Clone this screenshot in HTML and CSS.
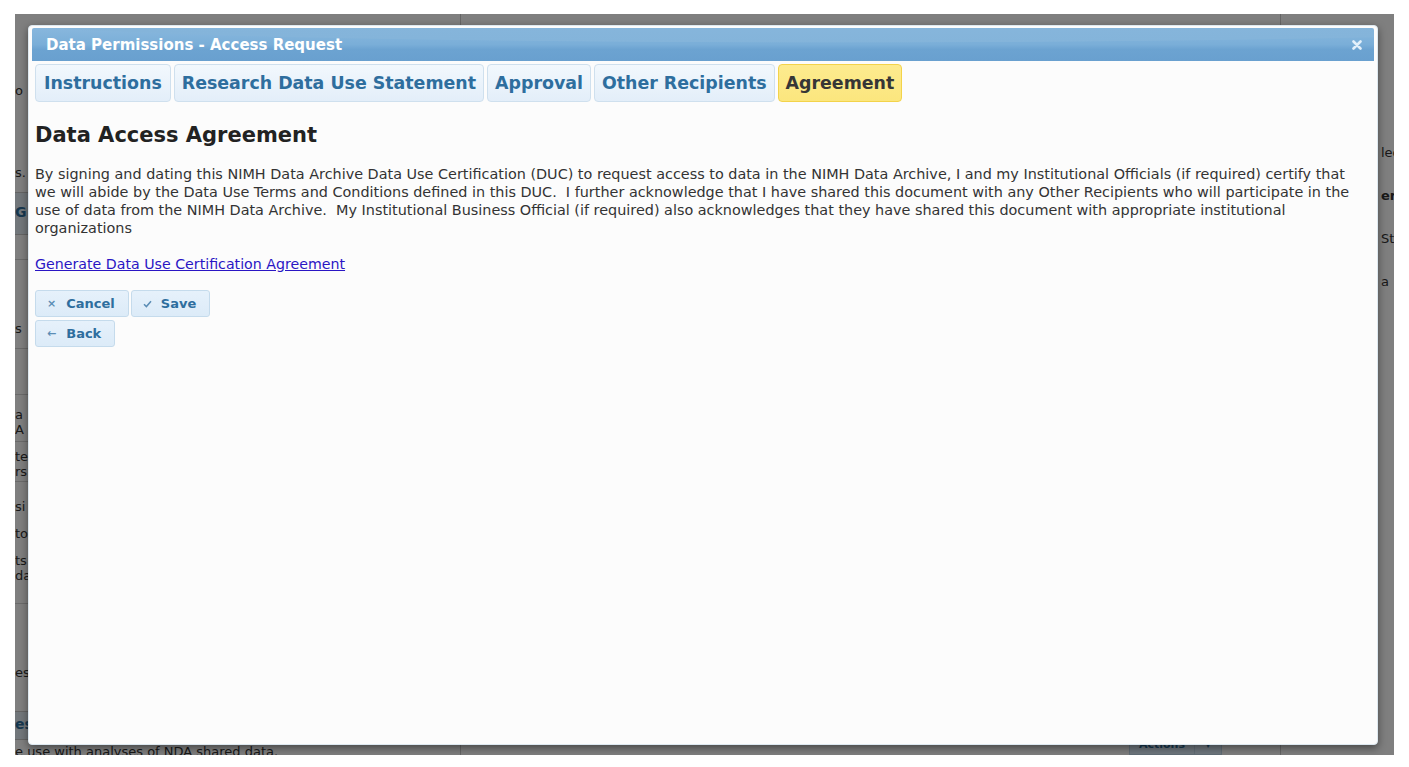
FILE: index.html
```html
<!DOCTYPE html>
<html>
<head>
<meta charset="utf-8">
<link rel="stylesheet" href="styles.css">
<title>Data Permissions - Access Request</title>
</head>
<body>
<div class="viewport">
  <div class="bgpage">
    <div class="bg-left">
      <div class="bl f-o">o</div>
      <div class="bl f-s">s.</div>
      <div class="bl band band-g">G</div>
      <div class="bl row-empty"></div>
      <div class="bl f-s2">s</div>
      <div class="bl row-gap"></div>
      <div class="bl f-a">a<br>A</div>
      <div class="bl f-te">te<br>rs</div>
      <div class="bl f-si">si<br><span class="gapline">to</span><br><span class="gapline">ts</span><br>da</div>
      <div class="bl f-es">es</div>
      <div class="bl band band-es">es</div>
      <div class="bl f-last">e use with analyses of NDA shared data.</div>
    </div>
    <div class="bg-right">
      <div class="br">lec</div>
      <div class="br bold">err</div>
      <div class="br">St</div>
      <div class="br">a</div>
      <div class="actions-row"><span class="actions">Actions</span><span class="act-arrow">▾</span></div>
    </div>
  </div>
  <div class="overlay"></div>
  <div class="dialog">
    <div class="titlebar">
      <span class="title">Data Permissions - Access Request</span>
      <svg class="close" width="10" height="10" viewBox="0 0 10 10"><path d="M1.5 1.5 L8.5 8.5 M8.5 1.5 L1.5 8.5" stroke="#e2effa" stroke-width="2.6" stroke-linecap="round"/></svg>
    </div>
    <div class="tabs">
      <span class="tab">Instructions</span>
      <span class="tab">Research Data Use Statement</span>
      <span class="tab">Approval</span>
      <span class="tab">Other Recipients</span>
      <span class="tab active">Agreement</span>
    </div>
    <div class="content">
      <h2>Data Access Agreement</h2>
      <p class="statement">By signing and dating this NIMH Data Archive Data Use Certification (DUC) to request access to data in the NIMH Data Archive, I and my Institutional Officials (if required) certify that we will abide by the Data Use Terms and Conditions defined in this DUC.&nbsp; I further acknowledge that I have shared this document with any Other Recipients who will participate in the use of data from the NIMH Data Archive.&nbsp; My Institutional Business Official (if required) also acknowledges that they have shared this document with appropriate institutional organizations</p>
      <p class="linkrow"><a href="#">Generate Data Use Certification Agreement</a></p>
      <div class="btnrow">
        <span class="btn"><span class="ico">×</span>Cancel</span>
        <span class="btn"><svg class="ico-svg" width="9" height="8" viewBox="0 0 9 8"><path d="M1 4.2 L3.4 6.6 L8 1.2" fill="none" stroke="#5b8db5" stroke-width="1.5"/></svg>Save</span>
      </div>
      <div class="btnrow">
        <span class="btn"><span class="ico">←</span>Back</span>
      </div>
    </div>
  </div>
</div>
</body>
</html>
```

FILE: styles.css
```css
html, body {
  margin: 0;
  padding: 0;
  background: #ffffff;
}
body {
  font-family: "DejaVu Sans", Verdana, sans-serif;
  width: 1409px;
  height: 767px;
  overflow: hidden;
}
.viewport {
  position: relative;
  margin: 14px 15px 0 15px;
  width: 1379px;
  height: 741px;
  overflow: hidden;
  background: #ffffff;
}
.bgpage {
  display: flex;
  justify-content: space-between;
  height: 100%;
  font-size: 13px;
  color: #333;
}
.bg-left {
  width: 445px;
  border-right: 1px solid #ccc;
  display: flex;
  flex-direction: column;
}
.bl {
  line-height: 15px;
  flex: none;
  white-space: nowrap;
}
.f-o { margin-top: 69px; }
.f-s { margin-top: 67px; }
.band {
  font-weight: bold;
  color: #2e6e9e;
  font-size: 14px;
  border-top: 1px solid #c8c8c8;
  border-bottom: 1px solid #c8c8c8;
  background: #e4eef7;
}
.band-g { margin-top: 12px; height: 41px; line-height: 39px; }
.row-empty { height: 24px; border-bottom: 1px solid #d5d5d5; }
.f-s2 { margin-top: 61px; padding-bottom: 12px; border-bottom: 1px solid #d5d5d5; }
.row-gap { height: 45px; border-bottom: 1px solid #d5d5d5; }
.f-a { padding-top: 12px; padding-bottom: 4px; border-bottom: 1px solid #d5d5d5; }
.f-te { padding-top: 7px; padding-bottom: 2px; border-bottom: 1px solid #d5d5d5; }
.f-si { padding-top: 17px; padding-bottom: 20px; border-bottom: 1px solid #d5d5d5; }
.gapline { display: inline-block; margin-top: 12px; }
.f-es { margin-top: 61px; }
.band-es { margin-top: 31px; height: 27px; line-height: 25px; }
.f-last { margin-top: 5px; line-height: 14px; }
.bg-right {
  width: 114px;
  border-left: 1px solid #ccc;
  display: flex;
  flex-direction: column;
  padding-top: 131px;
  box-sizing: border-box;
}
.br {
  padding-left: 100px;
  height: 43px;
  line-height: 16px;
  white-space: nowrap;
  flex: none;
}
.br.bold { font-weight: bold; }
.actions-row {
  margin-top: auto;
  margin-left: -152px;
  display: flex;
  font-size: 11px;
  font-weight: bold;
  color: #2e6e9e;
  line-height: 14px;
}
.actions {
  width: 64px;
  text-align: center;
  padding: 2px 0;
  background: #dfeffc;
  border: 1px solid #c5dbec;
}
.act-arrow {
  width: 26px;
  text-align: center;
  padding: 2px 0;
  background: #dfeffc;
  border: 1px solid #c5dbec;
  border-left: none;
}
.overlay {
  position: absolute;
  inset: 0;
  background: rgba(0, 0, 0, 0.5);
}
.dialog {
  position: absolute;
  left: 13px;
  top: 11px;
  width: 1350px;
  height: 720px;
  box-sizing: border-box;
  background: #fcfcfc;
  border: 1px solid #dde8f0;
  border-radius: 4px;
  padding: 2px 3px 3px 3px;
  box-shadow: 0 3px 8px rgba(0, 0, 0, 0.45);
  display: flex;
  flex-direction: column;
}
.titlebar {
  height: 33px;
  flex: none;
  display: flex;
  align-items: center;
  justify-content: space-between;
  padding: 0 12px 0 14px;
  background:
    radial-gradient(ellipse 1500px 40px at 60% -8px, #87b6dc 0%, #84b4da 55%, rgba(132,180,218,0) 57%),
    linear-gradient(to bottom, #88b7dd 0%, #7aaed8 50%, #6ca3d1 65%, #69a0cf 100%);
  border-radius: 2px 2px 0 0;
  color: #ffffff;
}
.title {
  font-weight: bold;
  font-size: 15px;
}
.close { display: block; }
.tabs {
  display: flex;
  gap: 3px;
  padding: 3px 3px 0 3px;
  flex: none;
}
.tab {
  height: 36px;
  line-height: 36px;
  padding: 0 7px;
  border: 1px solid #cfe0ee;
  border-radius: 4px;
  background: linear-gradient(to bottom, #f2f8fd, #e3eef9);
  color: #2e6e9e;
  font-weight: bold;
  font-size: 17.4px;
}
.tab:first-child { padding: 0 8px 0 8px; }
.tab.active {
  background: linear-gradient(to bottom, #fdeb8e, #fbe67e);
  border-color: #f3d34a;
  color: #363636;
}
.content {
  padding: 0 3px;
}
h2 {
  margin: 21px 0 0 0;
  font-size: 21px;
  line-height: 24px;
  color: #222;
}
.statement {
  margin: 18px 0 0 0;
  font-size: 14.4px;
  line-height: 18px;
  color: #333;
  padding-right: 20px;
}
.linkrow {
  margin: 18px 0 0 0;
  font-size: 14.2px;
  line-height: 18px;
}
.linkrow a { color: #2a16c4; }
.btnrow {
  display: flex;
  gap: 2px;
  margin-top: 17px;
}
.btnrow + .btnrow { margin-top: 3px; }
.btn {
  display: inline-flex;
  align-items: center;
  height: 25px;
  padding: 0 13px 0 11px;
  border: 1px solid #c5dbec;
  border-radius: 3px;
  background: linear-gradient(to bottom, #e6f1fb, #dcebf8);
  color: #2e6e9e;
  font-weight: bold;
  font-size: 13px;
}
.ico {
  font-size: 11px;
  margin-right: 10px;
  color: #5b8db5;
}
.ico-svg { margin-right: 9px; }
```
